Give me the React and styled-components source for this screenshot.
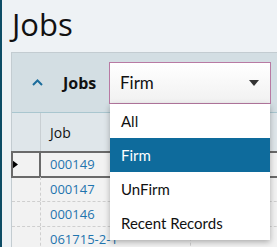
import React from 'react'
import styled, { createGlobalStyle } from 'styled-components';

const GlobalStyle = createGlobalStyle`
  html, body {
    margin: 0;
    padding: 0;
    background: #eef2f5;
    font-family: "Open Sans", "Noto Sans", sans-serif;
    overflow: hidden;
  }
`;

const Page = styled.div`
  height: 247px;
  width: 277px;
  box-sizing: border-box;
  border-left: 2px solid #0d4d66;
  padding-left: 9px;
  overflow: hidden;
`;

const Title = styled.h1`
  margin: 0;
  padding: 3px 0 0 1px;
  height: 52px;
  box-sizing: border-box;
  font-size: 31px;
  font-weight: 400;
  line-height: 42px;
  color: #111;
`;

const Panel = styled.div`
  width: 300px;
  border: 1px solid #c3ccd1;
  background: #d3dee3;
`;

const PanelHeader = styled.div`
  height: 59px;
  display: flex;
  align-items: center;
  border-bottom: 1px solid #a9c6cf;
  position: relative;
  z-index: 2;
`;

const Chevron = styled.span`
  width: 42px;
  padding-left: 20px;
  box-sizing: border-box;
  display: flex;
  align-items: center;
  color: #1c6d9c;
`;

const PanelLabel = styled.span`
  font-size: 16px;
  font-weight: 700;
  color: #111;
  width: 46px;
  margin-left: 9px;
`;

const SelectWrap = styled.div`
  position: relative;
  width: 162px;
  height: 42px;
`;

const SelectBox = styled.div`
  height: 100%;
  box-sizing: border-box;
  border: 1px solid #b87aa3;
  background: linear-gradient(#ffffff, #f1f1f1);
  display: flex;
  align-items: center;
  justify-content: space-between;
  padding: 0 11px 0 10px;
  font-family: Lato, "Open Sans", sans-serif;
  font-size: 17px;
  color: #111;
`;

const Menu = styled.ul`
  position: absolute;
  top: 100%;
  left: 1px;
  right: 1px;
  margin: 0;
  padding: 0;
  list-style: none;
  background: #fff;
  box-shadow: 0 2px 6px rgba(0, 0, 0, 0.3);
`;

const MenuItem = styled.li`
  height: 34px;
  display: flex;
  align-items: center;
  padding-left: 11px;
  font-family: Lato, "Open Sans", sans-serif;
  font-size: 15px;
  color: ${p => (p.$active ? '#fff' : '#111')};
  background: ${p => (p.$active ? '#0e6b9c' : 'transparent')};
`;

const Grid = styled.div`
  background: #f2f2f2;
`;

const Row = styled.div`
  display: grid;
  grid-template-columns: 29px 150px 1fr;
  height: ${p => (p.$head ? '38px' : '24px')};
  background: ${p => (p.$head ? '#dfe6ea' : 'transparent')};
  border-bottom: ${p => (p.$head ? '1px solid #c9cfd3' : '1px dashed #cfcfcf')};
  outline: ${p => (p.$sel ? '2px solid #6a6a6a' : 'none')};
  outline-offset: -1px;
  position: relative;
`;

const Cell = styled.div`
  display: flex;
  align-items: center;
  padding-left: 9px;
  border-right: ${p => (p.$head ? '1px solid #c9cfd3' : p.$sel ? '2px solid #6a6a6a' : '1px dashed #cfcfcf')};
  font-size: ${p => (p.$head ? '14px' : '13px')};
  color: ${p => (p.$head ? '#111' : '#1f74ae')};
  overflow: hidden;
  white-space: nowrap;
`;

const Indicator = styled(Cell)`
  padding-left: 0;
`;

const jobs = ['000149', '000147', '000146', '061715-2-1'];
const options = ['All', 'Firm', 'UnFirm', 'Recent Records'];

export default function App() {
  return (
    <>
      <GlobalStyle />
      <Page>
        <Title>Jobs</Title>
        <Panel>
          <PanelHeader>
            <Chevron>
              <svg width="11" height="7" viewBox="0 0 11 7">
                <path d="M1 6 L5.5 1.5 L10 6" fill="none" stroke="currentColor" strokeWidth="2" />
              </svg>
            </Chevron>
            <PanelLabel>Jobs</PanelLabel>
            <SelectWrap>
              <SelectBox>
                <span>Firm</span>
                <svg width="10" height="6" viewBox="0 0 10 6">
                  <path d="M0 0 H10 L5 6 Z" fill="#333" />
                </svg>
              </SelectBox>
              <Menu>
                {options.map(o => (
                  <MenuItem key={o} $active={o === 'Firm'}>{o}</MenuItem>
                ))}
              </Menu>
            </SelectWrap>
          </PanelHeader>
          <Grid>
            <Row $head>
              <Indicator $head />
              <Cell $head>Job</Cell>
              <Cell $head />
            </Row>
            {jobs.map((j, i) => (
              <Row key={j} $sel={i === 0}>
                <Indicator $sel={i === 0}>
                  {i === 0 && (
                    <svg width="6" height="9" viewBox="0 0 6 9">
                      <path d="M0 0 L6 4.5 L0 9 Z" fill="#000" />
                    </svg>
                  )}
                </Indicator>
                <Cell>{j}</Cell>
                <Cell />
              </Row>
            ))}
          </Grid>
        </Panel>
      </Page>
    </>
  )
}
